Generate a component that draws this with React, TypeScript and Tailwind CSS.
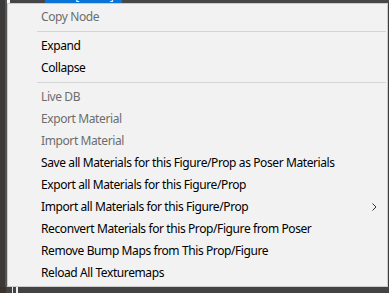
import React from "react";

type Item = { label: string; disabled?: boolean; sub?: boolean } | "sep";

const items: Item[] = [
  { label: "Copy Node", disabled: true },
  "sep",
  { label: "Expand" },
  { label: "Collapse" },
  "sep",
  { label: "Live DB", disabled: true },
  { label: "Export Material", disabled: true },
  { label: "Import Material", disabled: true },
  { label: "Save all Materials for this Figure/Prop as Poser Materials" },
  { label: "Export all Materials for this Figure/Prop" },
  { label: "Import all Materials for this Figure/Prop", sub: true },
  { label: "Reconvert Materials for this Prop/Figure from Poser" },
  { label: "Remove Bump Maps from This Prop/Figure" },
  { label: "Reload All Texturemaps" },
];

export default function App() {
  return (
    <div
      className="w-[389px] h-[293px] bg-[#464646] flex flex-col overflow-hidden"
      style={{ fontFamily: '"Segoe UI", "Noto Sans", "Liberation Sans", sans-serif' }}
    >
      {/* top strip */}
      <div className="h-[3px] flex shrink-0">
        <div className="w-[5px] bg-[#3a3a3a]" />
        <div className="w-[2px] bg-[#555555]" />
        <div className="w-[3px] bg-white" />
        <div className="w-[35px] bg-[#454545]" />
        <div className="w-[77px] bg-[#0a74d6] overflow-hidden">
          <div className="text-white text-[12px] leading-[14px] -mt-[11px] pl-[2px] whitespace-nowrap">
            SAM [Node]
          </div>
        </div>
        <div className="flex-1 bg-[#474747]" />
      </div>

      <div className="flex h-[284px] shrink-0">
        {/* left strip */}
        <div className="w-[5px] bg-[#3b3a39]" />
        <div className="w-[2px] bg-[#545454]" />
        {/* menu */}
        <div className="w-[381px] bg-[#f2f2f2] border border-[#cccccc] pt-[2px] pb-[2px] flex flex-col">
          {items.map((it, i) =>
            it === "sep" ? (
              <div key={i} className="h-[7px] flex items-center pl-[29px] pr-[1px]">
                <div className="h-px w-full bg-[#d4d4d4]" />
              </div>
            ) : (
              <div
                key={i}
                className={`h-[22px] flex items-center pl-[33px] pr-[10px] text-[12px] leading-[22px] tracking-[-0.4px] whitespace-nowrap ${
                  it.disabled ? "text-[#6d6d6d]" : "text-black"
                }`}
              >
                <span className="flex-1">{it.label}</span>
                {it.sub && (
                  <svg width="5" height="8" viewBox="0 0 5 8" className="mt-[-1px]">
                    <path d="M0.5 0.5 L4 4 L0.5 7.5" fill="none" stroke="#333333" strokeWidth="1" />
                  </svg>
                )}
              </div>
            )
          )}
        </div>
        <div className="w-[1px] bg-[#3c3c3c]" />
      </div>

      {/* bottom strip */}
      <div className="flex-1 flex">
        <div className="w-[6px] bg-[#3b322e]" />
        <div className="w-[6px] bg-[#434343]" />
        <div className="w-[1px] bg-[#e6e6e6]" />
        <div className="w-[3px] bg-[#434343]" />
        <div className="w-[2px] bg-[#f0f0f0]" />
        <div className="flex-1 bg-[#434343]" />
      </div>
    </div>
  );
}
